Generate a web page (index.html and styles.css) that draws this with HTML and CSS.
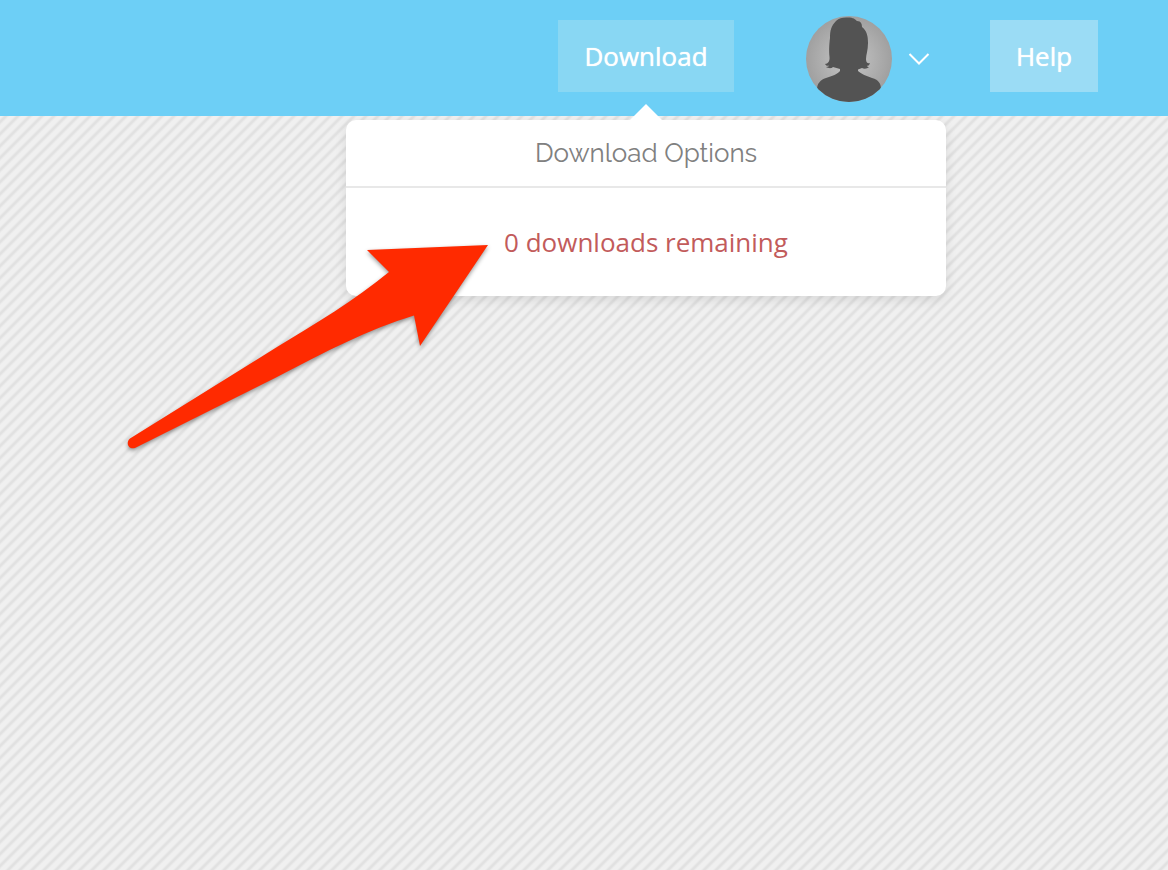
FILE: index.html
```html
<!DOCTYPE html>
<html lang="en">
<head>
<meta charset="utf-8">
<meta name="viewport" content="width=device-width, initial-scale=1">
<title>Download Options</title>
<link rel="stylesheet" href="styles.css">
</head>
<body>
<header class="topbar">
  <div class="download">
    <button class="btn btn-download" type="button" aria-expanded="true" aria-controls="download-options">Download</button>
    <section class="popover" id="download-options">
      <h2 class="popover-title">Download Options</h2>
      <p class="popover-body">0 downloads remaining</p>
    </section>
  </div>
  <button class="account" type="button" aria-label="Account menu">
    <svg class="avatar" viewBox="0 0 86 86" aria-hidden="true">
      <defs>
        <radialGradient id="avatar-bg"><stop offset="0" stop-color="#c8c8c8"/><stop offset="1" stop-color="#a0a0a0"/></radialGradient>
        <clipPath id="avatar-clip"><circle cx="43" cy="43" r="43"/></clipPath>
      </defs>
      <g clip-path="url(#avatar-clip)">
        <rect width="86" height="86" fill="url(#avatar-bg)"/>
        <path fill="#535353" d="M40 1.500C47 1 49 3 51 5C55 5 56 8 56 11C61 15 62 20 62 27C62 34 60 39 60 43C60 47 62 48 64 47C63 50 62 50 61 49.500C61 51 62 51 63 51C61 53 58 53 56 52L52 53.500L52 55C55 58 61 60 66 62C73 64 75 68 75 73L75 86H11V73C11 68 14 64 20 62C26 60 32 58 34 55L34 53L27 51C25 53 22 52 20 51C22 51 23 50 23 49.500C22 50 20 50 19 48C22 48 24 45 23.500 41C23 35 23 30 24 22C24 15 25 10 30 5C33 2 36 1.500 40 1.500Z"/>
      </g>
    </svg>
    <svg class="chevron" viewBox="0 0 22 12" aria-hidden="true"><path d="M1.500 1L11 10.500L20.500 1" fill="none" stroke="#fff" stroke-width="2"/></svg>
  </button>
  <button class="btn btn-help" type="button">Help</button>
</header>
<main class="canvas">
  <svg class="arrow" viewBox="0 0 380 220" aria-hidden="true">
    <path fill="#ff2a00" d="M368 15L300 116L294 85.500C249 99 205 122 157 147L15 218C9 220 5 213 10 208.500L157 117C195 94 235 70 269 42L247 20Z"/>
  </svg>
</main>
</body>
</html>
```

FILE: styles.css
```css
* {
  box-sizing: border-box;
}

body {
  margin: 0;
  min-height: 100vh;
  display: flex;
  flex-direction: column;
  font-family: "Open Sans", "Noto Sans", sans-serif;
  font-size: 26px;
  line-height: 36px;
  background: #efefef;
}

button {
  border: 0;
  padding: 0;
  font: inherit;
  color: inherit;
  background: none;
  cursor: pointer;
}

.topbar {
  display: flex;
  justify-content: flex-end;
  align-items: flex-start;
  height: 116px;
  padding: 20px 70px 0 24px;
  color: #fff;
  background: #6dcff6;
}

.download {
  position: relative;
  margin-right: 72px;
}

.btn {
  height: 72px;
  padding: 0 24px;
  text-shadow: 0 0 1px #fff;
}

.btn-download {
  min-width: 176px;
  background: #89d7f3;
}

.btn-help {
  min-width: 108px;
  background: #9bdcf5;
}

.account {
  display: flex;
  align-items: center;
  gap: 16px;
  margin: -4px 60px 0 0;
}

.avatar {
  width: 86px;
  height: 86px;
}

.chevron {
  width: 22px;
  height: 12px;
}

.popover {
  position: absolute;
  top: 100px;
  left: 50%;
  width: 600px;
  margin-left: -300px;
  text-align: center;
  background: #fff;
  border-radius: 10px;
  box-shadow: 0 4px 12px rgba(0, 0, 0, 0.1);
}

.popover::before {
  content: "";
  position: absolute;
  bottom: 100%;
  left: 50%;
  margin-left: -16px;
  border: 16px solid transparent;
  border-top: 0;
  border-bottom-color: #fff;
}

.popover-title {
  margin: 0;
  padding: 15px 20px;
  font-family: Raleway, "Open Sans", sans-serif;
  font-size: 26px;
  font-weight: 400;
  color: #808080;
  border-bottom: 2px solid #e8e8e8;
}

.popover-body {
  margin: 0;
  padding: 36px 20px;
  color: #c25b5b;
}

.canvas {
  flex: 1;
  background-color: #efefef;
  background-image: linear-gradient(135deg, #f0f0f0 10%, #e1e1e1 22%, #e1e1e1 28%, #f0f0f0 40%, #f0f0f0 60%, #e1e1e1 72%, #e1e1e1 78%, #f0f0f0 90%);
  background-size: 12px 12px;
}

.arrow {
  position: absolute;
  top: 230px;
  left: 120px;
  width: 380px;
  height: 220px;
  filter: drop-shadow(0 2px 2px rgba(0, 0, 0, 0.4));
}
```
